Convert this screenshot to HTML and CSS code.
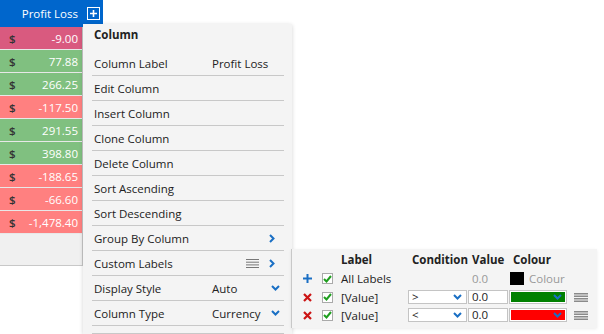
FILE: index.html
```html
<!DOCTYPE html>
<html lang="en">
<head>
  <meta charset="UTF-8">
  <title>Grid Column Menu</title>
  <link rel="stylesheet" href="styles.css">
</head>
<body>
  <div class="grid">
    <div class="grid-head">
      <span class="head-label">Profit Loss</span>
      <svg class="head-add" width="13" height="13" viewBox="0 0 13 13">
        <rect x="0.5" y="0.5" width="12" height="12" fill="none" stroke="#fff" stroke-width="1"/>
        <path d="M6.5 3v7M3 6.5h7" stroke="#fff" stroke-width="1.6"/>
      </svg>
    </div>
    <div class="grid-body">
      <div class="grid-row loss-sel"><span class="cur">$</span><span class="amt">-9.00</span></div>
      <div class="grid-row profit"><span class="cur">$</span><span class="amt">77.88</span></div>
      <div class="grid-row profit"><span class="cur">$</span><span class="amt">266.25</span></div>
      <div class="grid-row loss"><span class="cur">$</span><span class="amt">-117.50</span></div>
      <div class="grid-row profit"><span class="cur">$</span><span class="amt">291.55</span></div>
      <div class="grid-row profit"><span class="cur">$</span><span class="amt">398.80</span></div>
      <div class="grid-row loss"><span class="cur">$</span><span class="amt">-188.65</span></div>
      <div class="grid-row loss"><span class="cur">$</span><span class="amt">-66.60</span></div>
      <div class="grid-row loss"><span class="cur">$</span><span class="amt">-1,478.40</span></div>
    </div>
  </div>

  <!-- column menu popup -->
  <div class="col-menu">
    <div class="menu-title">Column</div>
    <div class="menu-item"><span class="item-label">Column Label</span><span class="item-value">Profit Loss</span></div>
    <div class="menu-item">Edit Column</div>
    <div class="menu-item">Insert Column</div>
    <div class="menu-item">Clone Column</div>
    <div class="menu-item">Delete Column</div>
    <div class="menu-item">Sort Ascending</div>
    <div class="menu-item">Sort Descending</div>
    <div class="menu-item">
      <span class="item-label">Group By Column</span>
      <svg class="chev-right" width="6" height="9" viewBox="0 0 6 9"><path d="M1 1l3.5 3.5L1 8" fill="none" stroke="#1a6fc4" stroke-width="2"/></svg>
    </div>
    <div class="menu-item">
      <span class="item-label">Custom Labels</span>
      <svg class="lines" width="13" height="9" viewBox="0 0 13 9"><path d="M0 .5h13M0 3.2h13M0 5.9h13M0 8.5h13" stroke="#777" stroke-width="1"/></svg>
      <svg class="chev-right" width="6" height="9" viewBox="0 0 6 9"><path d="M1 1l3.5 3.5L1 8" fill="none" stroke="#1a6fc4" stroke-width="2"/></svg>
    </div>
    <div class="menu-item">
      <span class="item-label">Display Style</span><span class="item-value">Auto</span>
      <svg class="chev-down" width="9" height="6" viewBox="0 0 9 6"><path d="M1 1l3.5 3.5L8 1" fill="none" stroke="#1a6fc4" stroke-width="2"/></svg>
    </div>
    <div class="menu-item">
      <span class="item-label">Column Type</span><span class="item-value">Currency</span>
      <svg class="chev-down" width="9" height="6" viewBox="0 0 9 6"><path d="M1 1l3.5 3.5L8 1" fill="none" stroke="#1a6fc4" stroke-width="2"/></svg>
    </div>
    <div class="menu-item last"></div>
  </div>

  <!-- custom labels sub panel -->
  <div class="label-panel">
    <div class="lp-row lp-head">
      <span></span><span></span>
      <span>Label</span>
      <span class="pad">Condition</span>
      <span class="pad">Value</span>
      <span class="pad">Colour</span>
      <span></span>
    </div>
    <div class="lp-row">
      <svg width="9" height="9" viewBox="0 0 9 9"><path d="M4.5 0v9M0 4.5h9" stroke="#1a6fc4" stroke-width="2"/></svg>
      <span class="check"><svg width="9" height="8" viewBox="0 0 9 8"><path d="M1 4l2.5 2.5L8 1" fill="none" stroke="#1e9e1e" stroke-width="2"/></svg></span>
      <span>All Labels</span>
      <span></span>
      <span class="pad muted">0.0</span>
      <span class="swatch-cell"><span class="swatch"></span><span class="muted">Colour</span></span>
      <span></span>
    </div>
    <div class="lp-row">
      <svg width="9" height="9" viewBox="0 0 9 9"><path d="M1 1l7 7M8 1l-7 7" stroke="#cc1414" stroke-width="2.2"/></svg>
      <span class="check"><svg width="9" height="8" viewBox="0 0 9 8"><path d="M1 4l2.5 2.5L8 1" fill="none" stroke="#1e9e1e" stroke-width="2"/></svg></span>
      <span>[Value]</span>
      <span class="box select">&gt;<svg width="9" height="6" viewBox="0 0 9 6"><path d="M1 1l3.5 3.5L8 1" fill="none" stroke="#1a6fc4" stroke-width="2"/></svg></span>
      <span class="box">0.0</span>
      <span class="box colour"><span class="fill green"><svg width="9" height="6" viewBox="0 0 9 6"><path d="M1 1l3.5 3.5L8 1" fill="none" stroke="#1a6fc4" stroke-width="2"/></svg></span></span>
      <svg class="grip" width="14" height="9" viewBox="0 0 14 9"><path d="M0 .8h14M0 3.3h14M0 5.8h14M0 8.3h14" stroke="#8a8a8a" stroke-width="1.4"/></svg>
    </div>
    <div class="lp-row">
      <svg width="9" height="9" viewBox="0 0 9 9"><path d="M1 1l7 7M8 1l-7 7" stroke="#cc1414" stroke-width="2.2"/></svg>
      <span class="check"><svg width="9" height="8" viewBox="0 0 9 8"><path d="M1 4l2.5 2.5L8 1" fill="none" stroke="#1e9e1e" stroke-width="2"/></svg></span>
      <span>[Value]</span>
      <span class="box select">&lt;<svg width="9" height="6" viewBox="0 0 9 6"><path d="M1 1l3.5 3.5L8 1" fill="none" stroke="#1a6fc4" stroke-width="2"/></svg></span>
      <span class="box">0.0</span>
      <span class="box colour"><span class="fill red"><svg width="9" height="6" viewBox="0 0 9 6"><path d="M1 1l3.5 3.5L8 1" fill="none" stroke="#1a6fc4" stroke-width="2"/></svg></span></span>
      <svg class="grip" width="14" height="9" viewBox="0 0 14 9"><path d="M0 .8h14M0 3.3h14M0 5.8h14M0 8.3h14" stroke="#8a8a8a" stroke-width="1.4"/></svg>
    </div>
  </div>
</body>
</html>
```

FILE: styles.css
```css
body {
  margin: 0;
  background: #fff;
  font-family: 'Open Sans', 'Noto Sans', sans-serif;
  font-size: 11.5px;
  color: #222;
  position: relative;
  height: 334px;
  overflow: hidden;
}
/* grid column */
.grid {
  width: 103px;
}
.grid-head {
  height: 27px;
  background: #0066cc;
  color: #fff;
  display: flex;
  align-items: center;
  justify-content: flex-end;
  gap: 9px;
  padding-right: 3px;
  box-sizing: border-box;
}
.head-add {
  display: block;
}
.grid-body {
  width: 83px;
  height: 239px;
  background: #f0f0f0;
  border-right: 1px solid #c8c8c8;
  border-bottom: 1px solid #c8c8c8;
  box-sizing: border-box;
}
.grid-row {
  height: 23px;
  border-bottom: 1px solid #e8e8e8;
  box-sizing: border-box;
  display: flex;
  align-items: center;
  justify-content: space-between;
  padding: 0 4px 0 9px;
}
.grid-row .cur {
  color: #333;
  font-weight: 600;
}
.grid-row .amt {
  color: #fff;
}
.loss-sel { background: #d95a7f; }
.profit { background: #80c080; }
.loss { background: #ff8080; }

/* column menu popup */
.col-menu {
  position: absolute;
  left: 83px;
  top: 24px;
  width: 209px;
  height: 310px;
  background: #f4f4f4;
  box-shadow: 0 1px 4px rgba(0,0,0,0.18);
}
.menu-title {
  height: 27px;
  box-sizing: border-box;
  padding: 3px 0 0 11px;
  font-weight: bold;
}
.menu-item {
  height: 25px;
  margin: 0 8px 0 9px;
  padding: 0 0 0 2px;
  border-bottom: 1px solid #c8c8c8;
  box-sizing: border-box;
  display: flex;
  align-items: center;
}
.menu-item.last {
  height: 8px;
}
.item-label {
  width: 118px;
  flex-shrink: 0;
}
.item-value {
  flex: 1;
}
.lines {
  margin-left: auto;
  margin-right: 10px;
}
.chev-right {
  margin-left: auto;
  margin-right: 9px;
}
.lines + .chev-right {
  margin-left: 0;
}
.chev-down {
  margin-right: 4px;
}

/* custom labels panel */
.label-panel {
  position: absolute;
  left: 291px;
  top: 249px;
  width: 306px;
  height: 79px;
  background: #f4f4f4;
  border-left: 1px solid #c8c8c8;
  box-sizing: border-box;
  padding: 1px 0 0 11px;
  box-shadow: 0 1px 3px rgba(0,0,0,0.08);
}
.lp-row {
  display: grid;
  grid-template-columns: 19px 19px 67px 60px 41px 59px 20px;
  align-items: center;
  height: 18px;
}
.lp-head {
  font-weight: bold;
  height: 19px;
}
.lp-row:nth-child(2) {
  height: 19px;
}
.pad {
  padding-left: 4px;
}
.muted {
  color: #999;
}
.check {
  width: 11px;
  height: 11px;
  background: #fff;
  border: 1px solid #aaa;
  box-sizing: border-box;
  display: flex;
  align-items: center;
  justify-content: center;
}
.swatch-cell {
  display: flex;
  align-items: center;
  gap: 5px;
  padding-left: 1px;
}
.swatch {
  width: 14px;
  height: 13px;
  background: #000;
}
.box {
  height: 14px;
  margin-right: 1px;
  background: #fff;
  border: 1px solid #c4c4c4;
  box-sizing: border-box;
  display: flex;
  align-items: center;
  padding-left: 3px;
  line-height: 12px;
}
.select {
  justify-content: space-between;
  padding-right: 4px;
}
.colour {
  padding: 1px;
}
.fill {
  flex: 1;
  height: 100%;
  display: flex;
  align-items: center;
  justify-content: flex-end;
  padding-right: 3px;
}
.green { background: #008000; }
.red { background: #ff0000; }
.grip {
  margin-left: 6px;
}
```
